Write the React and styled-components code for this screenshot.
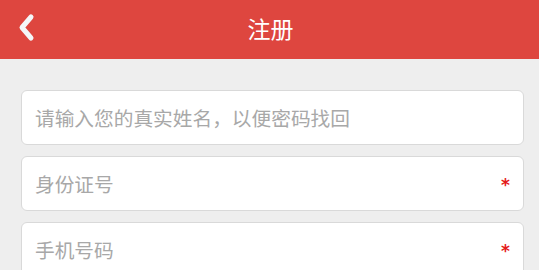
import React from 'react';
import styled, { createGlobalStyle } from 'styled-components';

const GlobalStyle = createGlobalStyle`
  html, body {
    margin: 0;
    padding: 0;
    background: #eeeeee;
    font-family: "Noto Sans CJK SC", "Noto Sans", sans-serif;
  }
`;

const Header = styled.header`
  position: relative;
  height: 59px;
  background: #de463f;
  display: flex;
  align-items: center;
  justify-content: center;
`;

const BackButton = styled.button`
  position: absolute;
  left: 14px;
  top: 10px;
  width: 28px;
  height: 36px;
  padding: 0;
  border: none;
  background: transparent;
  display: flex;
  align-items: center;
  justify-content: center;
  cursor: pointer;
`;

const Title = styled.h1`
  margin: 0;
  color: #ffffff;
  font-size: 23px;
  font-weight: 400;
  line-height: 1;
  margin-top: -3px;
  margin-left: 2px;
`;

const Form = styled.form`
  display: flex;
  flex-direction: column;
  gap: 11px;
  padding: 31px 15px 0 21px;
`;

const Field = styled.label`
  display: flex;
  align-items: center;
  height: 55px;
  box-sizing: border-box;
  background: #ffffff;
  border: 1px solid #d9d9d9;
  border-radius: 6px;
  padding: 0 13px 0 13px;
`;

const Input = styled.input`
  flex: 1;
  min-width: 0;
  border: none;
  outline: none;
  background: transparent;
  font-family: inherit;
  font-size: 19.7px;
  color: #333;
  padding: 0;
  &::placeholder {
    color: #a8a8a8;
  }
`;

const Required = styled.span`
  color: #e41a1a;
  font-size: 17px;
  font-weight: 700;
  font-family: "DejaVu Sans", sans-serif;
  line-height: 1;
  margin-top: 4px;
`;

const fields = [
  { placeholder: '请输入您的真实姓名，以便密码找回', required: false },
  { placeholder: '身份证号', required: true },
  { placeholder: '手机号码', required: true },
];

export default function App() {
  return (
    <>
      <GlobalStyle />
      <Header>
        <BackButton type="button" aria-label="返回">
          <svg width="22" height="30" viewBox="0 0 22 30">
            <polyline
              points="14,4 5,14.5 14,25"
              fill="none"
              stroke="#f4f6f8"
              strokeWidth="5"
              strokeLinecap="round"
              strokeLinejoin="round"
            />
          </svg>
        </BackButton>
        <Title>注册</Title>
      </Header>
      <Form>
        {fields.map((f) => (
          <Field key={f.placeholder}>
            <Input placeholder={f.placeholder} />
            {f.required && <Required>*</Required>}
          </Field>
        ))}
      </Form>
    </>
  );
}
